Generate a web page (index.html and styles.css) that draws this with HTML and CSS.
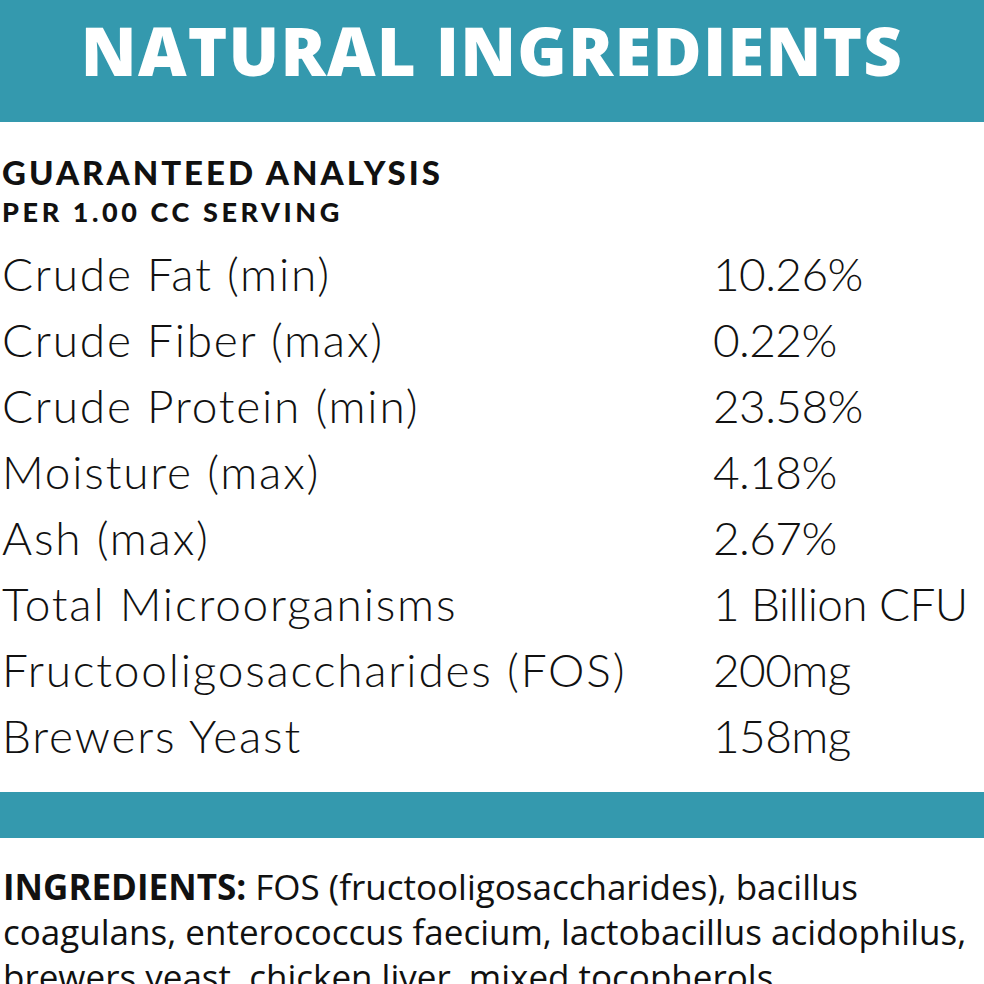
FILE: index.html
```html
<!DOCTYPE html>
<html>
<head>
<meta charset="utf-8">
<link rel="stylesheet" href="styles.css">
</head>
<body>
<div class="page">
  <header class="banner"><h1 class="banner-title">NATURAL INGREDIENTS</h1></header>
  <section class="analysis">
    <h2 class="analysis-title">GUARANTEED ANALYSIS</h2>
    <h3 class="analysis-sub">PER 1.00 CC SERVING</h3>
    <div class="rows">
      <div class="row"><span class="name">Crude Fat (min)</span><span class="val">10.26%</span></div>
      <div class="row"><span class="name">Crude Fiber (max)</span><span class="val">0.22%</span></div>
      <div class="row"><span class="name">Crude Protein (min)</span><span class="val">23.58%</span></div>
      <div class="row"><span class="name">Moisture (max)</span><span class="val">4.18%</span></div>
      <div class="row"><span class="name">Ash (max)</span><span class="val">2.67%</span></div>
      <div class="row"><span class="name">Total Microorganisms</span><span class="val">1 Billion CFU</span></div>
      <div class="row"><span class="name">Fructooligosaccharides (FOS)</span><span class="val">200mg</span></div>
      <div class="row"><span class="name">Brewers Yeast</span><span class="val">158mg</span></div>
    </div>
  </section>
  <div class="divider"></div>
  <p class="ingredients"><strong class="ing-label">INGREDIENTS:</strong> FOS (fructooligosaccharides), bacillus coagulans, enterococcus faecium, lactobacillus acidophilus, brewers yeast, chicken liver, mixed tocopherols.</p>
</div>
</body>
</html>
```
FILE: styles.css
```css
html, body {
  margin: 0;
  padding: 0;
  background: #ffffff;
}
.page {
  width: 984px;
  height: 984px;
  overflow: hidden;
  color: #111111;
}
.banner {
  height: 122px;
  background: #3499ae;
  display: flex;
  align-items: flex-start;
  justify-content: center;
}
.banner-title {
  margin: 0;
  padding-top: 10px;
  font-family: "Open Sans", sans-serif;
  font-weight: 800;
  font-size: 67px;
  line-height: 80px;
  color: #ffffff;
  letter-spacing: 1.2px;
}
.analysis {
  padding-left: 2px;
}
.analysis-title {
  margin: 0;
  padding-top: 30px;
  font-family: "Lato", sans-serif;
  font-weight: 900;
  font-size: 33px;
  line-height: 40px;
  letter-spacing: 3px;
}
.analysis-sub {
  margin: 0;
  font-family: "Lato", sans-serif;
  font-weight: 900;
  font-size: 27px;
  line-height: 40px;
  letter-spacing: 3.6px;
}
.rows {
  display: flex;
  flex-direction: column;
  padding-top: 9px;
}
.row {
  display: grid;
  grid-template-columns: 711px 1fr;
  height: 66px;
  align-items: center;
  font-family: "Lato", sans-serif;
  font-weight: 300;
  font-size: 46px;
  line-height: 66px;
  color: #111111;
}
.name {
  letter-spacing: 1.8px;
}
.val {
  letter-spacing: -0.6px;
}
.divider {
  height: 46px;
  background: #3499ae;
  margin-top: 23px;
}
.ingredients {
  margin: 0;
  padding: 26px 0 0 3px;
  font-family: "Open Sans", sans-serif;
  font-size: 35px;
  line-height: 45px;
  color: #111111;
}
.ing-label {
  font-weight: 700;
}
```
